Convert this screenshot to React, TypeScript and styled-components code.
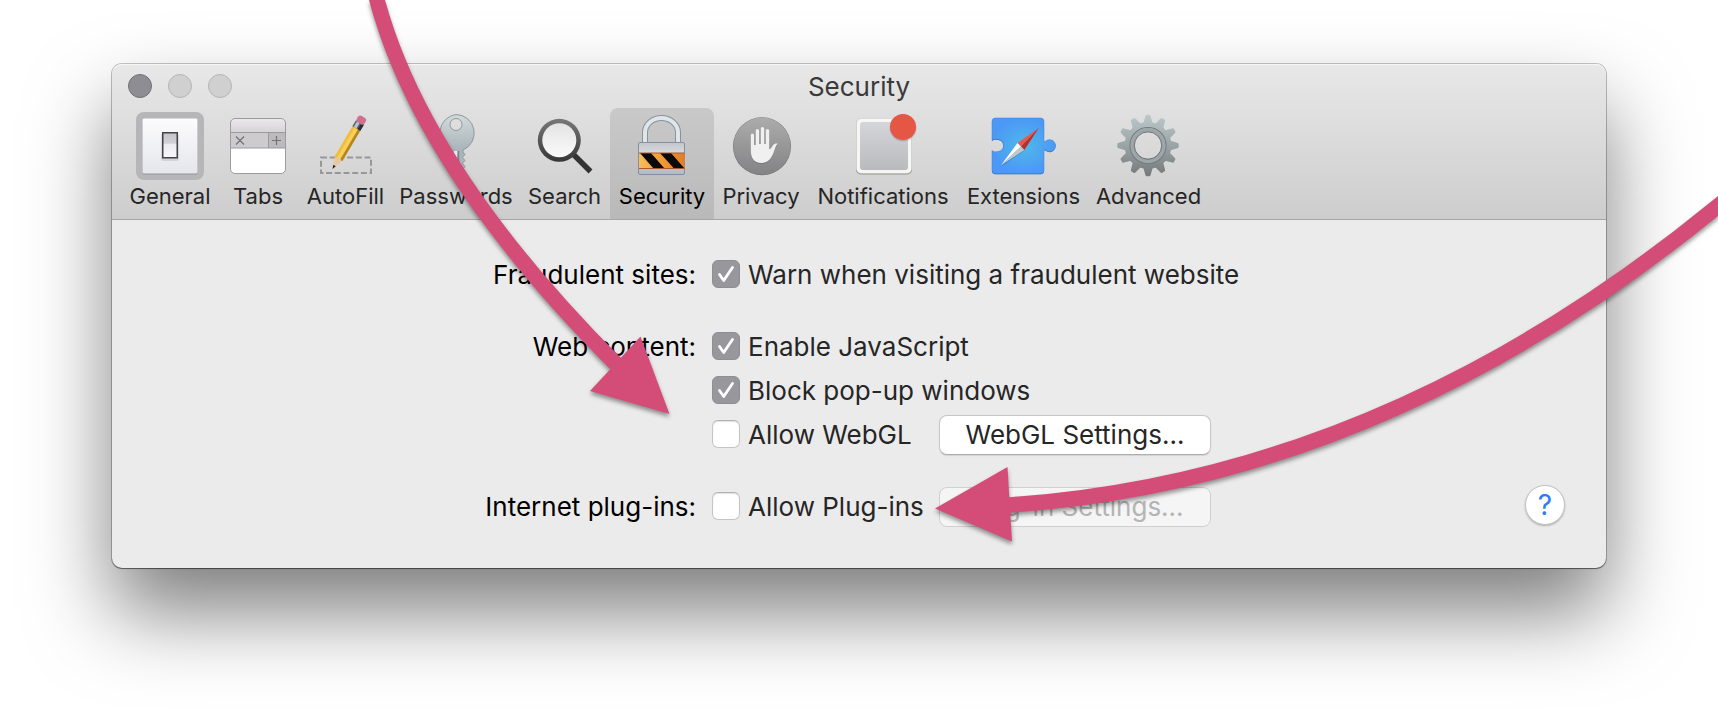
import React, { useState } from "react";
import styled, { createGlobalStyle } from "styled-components";

const GlobalStyle = createGlobalStyle`
  *, *::before, *::after { box-sizing: border-box; }
  body {
    margin: 0;
    background: #fff;
    font-family: Inter, "Liberation Sans", sans-serif;
    color: #262626;
  }
  button { font-family: inherit; }
`;

const Desktop = styled.main`
  position: relative;
  min-height: 100vh;
  overflow: hidden;
  padding: 64px 112px 160px;
`;

const Panel = styled.section`
  border-radius: 10px;
  background: #ebebeb;
  box-shadow:
    0 0 0 1px rgba(0, 0, 0, 0.22),
    0 1px 1px rgba(0, 0, 0, 0.4),
    0 44px 82px rgba(0, 0, 0, 0.51);
`;

const PanelHeader = styled.header`
  border-radius: 10px 10px 0 0;
  border-bottom: 1px solid #a6a6a6;
  background: linear-gradient(#e8e8e8, #cdcdcd);
  box-shadow: inset 0 1px 0 #f6f6f6;
`;

const TitleBar = styled.div`
  display: grid;
  grid-template-columns: 1fr auto 1fr;
  align-items: center;
  height: 44px;
  padding: 0 16px;
`;

const WindowControls = styled.div`
  display: flex;
  gap: 16px;
`;

const WindowButton = styled.button<{ $active?: boolean }>`
  width: 24px;
  height: 24px;
  padding: 0;
  border: 1px solid ${(p) => (p.$active ? "#727177" : "#b4b4b4")};
  border-radius: 50%;
  background: ${(p) => (p.$active ? "#8e8d93" : "#d0d0d0")};
`;

const Title = styled.h1`
  margin: 0;
  padding-top: 2px;
  font-size: 26px;
  font-weight: 400;
  line-height: 32px;
  color: #3a3a3a;
`;

const Toolbar = styled.nav`
  display: flex;
  padding: 0 10px;
`;

const ToolbarItem = styled.button<{ $width: number; $selected?: boolean }>`
  display: flex;
  flex-direction: column;
  align-items: center;
  gap: 2px;
  flex: 0 0 ${(p) => p.$width}px;
  height: 111px;
  padding: 4px 0 0;
  border: 0;
  border-radius: 8px 8px 0 0;
  background: ${(p) => (p.$selected ? "linear-gradient(#c9c9c9, #b9b9b9)" : "none")};
  font-size: 22px;
  line-height: 28px;
  white-space: nowrap;
  color: ${(p) => (p.$selected ? "#000" : "#262626")};
`;

const ItemIcon = styled.svg`
  flex: none;
  width: 68px;
  height: 68px;
  overflow: visible;
`;

const PanelBody = styled.div`
  display: grid;
  grid-template-columns: 1fr auto 1fr;
  padding: 32px 41px 40px;
`;

const Settings = styled.form`
  grid-column: 2;
  display: flex;
  flex-direction: column;
  gap: 28px;
`;

const SettingGroup = styled.div`
  display: grid;
  grid-template-columns: 210px 520px;
  column-gap: 16px;
`;

const GroupLabel = styled.span`
  justify-self: end;
  height: 44px;
  font-size: 26px;
  line-height: 46px;
  white-space: nowrap;
  color: #000;
`;

const Options = styled.div`
  display: flex;
  flex-direction: column;
`;

const OptionRow = styled.div`
  display: grid;
  grid-template-columns: 227px 272px;
  align-items: center;
  height: 44px;
`;

const CheckLabel = styled.label`
  display: flex;
  align-items: center;
  gap: 8px;
  white-space: nowrap;
`;

const CheckText = styled.span`
  padding-top: 2px;
  font-size: 26px;
  line-height: 32px;
`;

const CheckFrame = styled.span`
  display: grid;
  width: 28px;
  height: 28px;

  > * { grid-area: 1 / 1; }
`;

const CheckInput = styled.input`
  appearance: none;
  width: 28px;
  height: 28px;
  margin: 0;
  border: 1px solid #c4c4c4;
  border-top-color: #b0b0b0;
  border-radius: 6px;
  background: #fff;
  box-shadow: inset 0 1px 1px rgba(0, 0, 0, 0.12);

  &:checked {
    border-color: #8f8e94;
    background: #98979c;
    box-shadow: none;
  }
`;

const CheckMark = styled.svg`
  width: 28px;
  height: 28px;
  pointer-events: none;
`;

const SettingsButton = styled.button`
  height: 40px;
  margin-top: 2px;
  padding: 0;
  border: 1px solid #c6c6c6;
  border-bottom-color: #aeaeae;
  border-radius: 8px;
  background: #fff;
  box-shadow: 0 1px 1px rgba(0, 0, 0, 0.1);
  font-size: 26px;
  line-height: 32px;
  color: #262626;

  &:disabled {
    border-color: #d0d0d0;
    background: #f5f5f5;
    box-shadow: none;
    color: #b4b4b4;
  }
`;

const HelpArea = styled.div`
  display: flex;
  justify-content: flex-end;
  align-items: center;
  align-self: end;
  height: 46px;
`;

const HelpButton = styled.button`
  width: 40px;
  height: 40px;
  padding: 0;
  border: 1px solid #c4c4c4;
  border-radius: 50%;
  background: #fff;
  box-shadow: 0 1px 2px rgba(0, 0, 0, 0.25);
  font-size: 28px;
  line-height: 32px;
  color: #2f7cf6;
`;

const Annotations = styled.svg`
  position: absolute;
  top: 0;
  left: 0;
  width: 100%;
  height: 728px;
  pointer-events: none;
  filter: drop-shadow(0 3px 2px rgba(0, 0, 0, 0.4));
`;

function GeneralIcon() {
  return (
    <ItemIcon viewBox="0 0 68 68" aria-hidden="true">
      <defs>
        <linearGradient id="plate" x2="0" y2="1">
          <stop stopColor="#fcfcfe" />
          <stop offset="1" stopColor="#e5e6eb" />
        </linearGradient>
        <linearGradient id="rocker" x2="0" y2="1">
          <stop stopColor="#c4c4c8" />
          <stop offset="0.42" stopColor="#d2d2d6" />
          <stop offset="0.46" stopColor="#ececf0" />
          <stop offset="1" stopColor="#f8f8fa" />
        </linearGradient>
      </defs>
      <rect width="68" height="68" rx="8" fill="#b6b6b8" />
      <rect x="6.5" y="7.5" width="55" height="55" rx="1.5" fill="#939396" />
      <rect x="6.5" y="6.5" width="55" height="55" rx="1.5" fill="url(#plate)" />
      <rect x="25" y="21" width="18" height="28" rx="2" fill="#000" opacity="0.1" />
      <rect x="26.750" y="20.750" width="14.500" height="25" fill="url(#rocker)" stroke="#434348" strokeWidth="1.500" />
    </ItemIcon>
  );
}

function TabsIcon() {
  return (
    <ItemIcon viewBox="0 0 68 68" aria-hidden="true">
      <defs>
        <linearGradient id="tabTop" x2="0" y2="1">
          <stop stopColor="#ebe9eb" />
          <stop offset="1" stopColor="#d6d4d6" />
        </linearGradient>
      </defs>
      <rect x="6.5" y="6.5" width="55" height="55" rx="4.5" fill="#fff" />
      <path d="M6.5 20V11a4.500 4.500 0 0 1 4.500-4.500h46a4.500 4.500 0 0 1 4.500 4.500v9z" fill="url(#tabTop)" />
      <rect x="6.500" y="20" width="38" height="16" fill="#cdcbcd" />
      <rect x="44.500" y="20" width="17" height="16" fill="#bcbabc" />
      <path d="M6.500 20.500h55M6.500 36h55M44.500 20.500V36" stroke="#9b9a9c" fill="none" />
      <rect x="6.500" y="6.500" width="55" height="55" rx="4.500" fill="none" stroke="#9c9c9e" />
      <path d="M12 24.500l8 8M20 24.500l-8 8M52.500 24v9M48 28.500h9" stroke="#737275" strokeWidth="1.200" />
    </ItemIcon>
  );
}

function AutoFillIcon() {
  return (
    <ItemIcon viewBox="0 0 68 68" aria-hidden="true">
      <rect x="9" y="45.500" width="50" height="15.500" fill="none" stroke="#979797" strokeWidth="2" strokeDasharray="6 2.700" />
      <g transform="translate(20.500 57) rotate(30.500)">
        <path d="M0 0L-4.500 -13L0 -15L4.500 -13Z" fill="#e8c79c" />
        <path d="M0 0L-1.400 -4H1.400Z" fill="#2b2420" />
        <path d="M-4.500 -12V-48H-1.500V-13Q-3 -11 -4.500 -12Z" fill="#f2bb3b" />
        <path d="M-1.800 -13V-48H2V-13Q0 -11 -1.800 -13Z" fill="#f9cf55" />
        <path d="M1.800 -13V-48H4.500V-12Q3 -11 1.800 -13Z" fill="#b98519" />
        <rect x="-4.600" y="-54" width="9.200" height="7" fill="#5d6773" />
        <rect x="-3" y="-54" width="3" height="7" fill="#b9c6d3" />
        <rect x="1.500" y="-54" width="3.100" height="7" fill="#2c2d31" />
        <rect x="-4.600" y="-60.500" width="9.200" height="7.500" rx="3" fill="#d0708f" />
      </g>
    </ItemIcon>
  );
}

function PasswordsIcon() {
  return (
    <ItemIcon viewBox="0 0 68 68" aria-hidden="true">
      <defs>
        <linearGradient id="keyMetal" x2="0" y2="1">
          <stop stopColor="#d2dadd" />
          <stop offset="0.600" stopColor="#a9b4b8" />
          <stop offset="1" stopColor="#b9c0c3" />
        </linearGradient>
      </defs>
      <path
        fillRule="evenodd"
        d="M34 2.500A18.500 18.500 0 0 1 41 38V40L43 42.500L40.500 45.500L43 48.500L40.500 51.500L43 54.500L41.500 56.500L42.500 60L37 63L29.500 58V38A18.500 18.500 0 0 1 34 2.500zM34 6.500a6 6 0 1 0 0 12a6 6 0 1 0 0-12z"
        fill="url(#keyMetal)"
        stroke="#8f999c"
        strokeWidth="1"
      />
      <path d="M33.500 39v20" stroke="#f0f3f4" strokeWidth="3" />
      <path d="M36.500 39v21" stroke="#7d878a" strokeWidth="1.500" />
    </ItemIcon>
  );
}

function SearchIcon() {
  return (
    <ItemIcon viewBox="0 0 68 68" aria-hidden="true">
      <defs>
        <linearGradient id="lensRim" x2="0" y2="1">
          <stop stopColor="#787878" />
          <stop offset="1" stopColor="#363636" />
        </linearGradient>
        <linearGradient id="lens" x2="0" y2="1">
          <stop stopColor="#e4e4e4" />
          <stop offset="1" stopColor="#fafafa" />
        </linearGradient>
      </defs>
      <path d="M42 42L59.500 59.500" stroke="#333" strokeWidth="5.500" />
      <circle cx="28.300" cy="28.300" r="21.500" fill="url(#lensRim)" />
      <circle cx="28.300" cy="28.300" r="17" fill="url(#lens)" />
    </ItemIcon>
  );
}

function SecurityIcon() {
  return (
    <ItemIcon viewBox="0 0 68 68" aria-hidden="true">
      <defs>
        <linearGradient id="lockBody" x2="0" y2="1">
          <stop stopColor="#c3c7cd" />
          <stop offset="0.350" stopColor="#d8dbdf" />
          <stop offset="1" stopColor="#b4b8bf" />
        </linearGradient>
        <linearGradient id="hazard">
          <stop stopColor="#f8bd5a" />
          <stop offset="0.500" stopColor="#f29a37" />
          <stop offset="1" stopColor="#e07d26" />
        </linearGradient>
      </defs>
      <path d="M17 31V20.500a16.500 14.500 0 0 1 33 0V31" fill="none" stroke="#8a929f" strokeWidth="6" />
      <path d="M17 31V20.500a16.500 14.500 0 0 1 33 0V31" fill="none" stroke="#dfe6e9" strokeWidth="4" />
      <rect x="10.500" y="30.500" width="46" height="32" rx="1.500" fill="url(#lockBody)" stroke="#8790a0" />
      <rect x="11" y="41" width="45.500" height="15.500" fill="url(#hazard)" />
      <path d="M12 41h11l13.500 15.500h-11zM32 41h11l13.500 15.500H46z" fill="#0c0a08" />
      <path d="M11 41h45.500M11 56.500h45.500" stroke="#a55a34" strokeWidth="1" />
    </ItemIcon>
  );
}

function PrivacyIcon() {
  const hand =
    "M23.800 38V23a1.600 1.600 0 0 1 3.200 0v10h1.700V18.700a1.700 1.700 0 0 1 3.400 0V32h1.700V16.600a1.700 1.700 0 0 1 3.400 0V32h1.600V18.700a1.700 1.700 0 0 1 3.400 0V37.500c1.800-.8 2.700-2.300 3.800-4.200c1-1.600 2.600-2 4.700-1.700c-1.700 1.800-2.400 4.200-3.500 7.400C45.500 44.500 42 51 34.500 51C27 51 23.800 46 23.800 38z";
  return (
    <ItemIcon viewBox="0 0 68 68" aria-hidden="true">
      <defs>
        <linearGradient id="disc" x2="0" y2="1">
          <stop stopColor="#acacac" />
          <stop offset="1" stopColor="#838385" />
        </linearGradient>
      </defs>
      <circle cx="35" cy="34.300" r="29" fill="#747476" />
      <circle cx="35" cy="34" r="28.500" fill="url(#disc)" />
      <path d={hand} fill="#6b6b6d" opacity="0.600" transform="translate(0 1)" />
      <path d={hand} fill="#f0f0f0" />
    </ItemIcon>
  );
}

function NotificationsIcon() {
  return (
    <ItemIcon viewBox="0 0 68 68" aria-hidden="true">
      <defs>
        <linearGradient id="tile" x2="0" y2="1">
          <stop stopColor="#d5d6da" />
          <stop offset="1" stopColor="#b9babc" />
        </linearGradient>
      </defs>
      <rect x="7" y="7.500" width="56" height="55" rx="5" fill="#929290" />
      <rect x="7" y="6.500" width="56" height="55" rx="5" fill="#c2c2c2" />
      <rect x="7.700" y="6.700" width="54.600" height="54.600" rx="4.500" fill="#f6f6f4" />
      <rect x="11" y="10" width="48" height="48" rx="3" fill="url(#tile)" />
      <circle cx="54" cy="16" r="13.500" fill="#000" opacity="0.140" />
      <circle cx="54" cy="15" r="13" fill="#e65644" />
    </ItemIcon>
  );
}

function ExtensionsIcon() {
  const outline =
    "M5.500 6H50.500A3.500 3.500 0 0 1 54 9.500V27.500C54 30 55 30 56 28.800A6 6 0 1 1 56 38.500C55 37 54 37.300 54 39.500V58.200A3.500 3.500 0 0 1 50.500 61.700H5.500A3.500 3.500 0 0 1 2 58.200V38.500C4 40.500 6 39.500 8 39.500A5.500 6 0 0 0 8 27.500C6 27.500 4 26.500 2 28.500V9.500A3.500 3.500 0 0 1 5.500 6Z";
  return (
    <ItemIcon viewBox="0 0 68 68" aria-hidden="true">
      <defs>
        <radialGradient id="puzzle">
          <stop stopColor="#4fb9ea" />
          <stop offset="1" stopColor="#4c98f6" />
        </radialGradient>
      </defs>
      <path d={outline} fill="#2c62ac" transform="translate(0 0.600)" />
      <path d={outline} fill="url(#puzzle)" stroke="#3d7fd6" strokeWidth="0.500" />
      <path d="M11.500 54.500L28 32L34.500 38.500Z" fill="#1f4f8d" opacity="0.350" />
      <path d="M49 15.700L27.500 31L31 34.500Z" fill="#e9584b" />
      <path d="M49 15.700L31 34.500L34.300 38Z" fill="#b8302a" />
      <path d="M11 53.300L27.500 31L31 34.500Z" fill="#fff" />
      <path d="M11 53.300L31 34.500L34.300 38Z" fill="#c3c7cb" />
    </ItemIcon>
  );
}

function AdvancedIcon() {
  const teeth = Array.from({ length: 12 }, (_, i) => i * 30);
  return (
    <ItemIcon viewBox="0 0 68 68" aria-hidden="true">
      <defs>
        <linearGradient id="gear" gradientUnits="userSpaceOnUse" x1="0" y1="2" x2="0" y2="65">
          <stop stopColor="#bccacd" />
          <stop offset="0.500" stopColor="#9aa3a5" />
          <stop offset="1" stopColor="#747879" />
        </linearGradient>
        <mask id="gearShape">
          <circle cx="33" cy="33.500" r="23.500" fill="#fff" />
          {teeth.map((a) => (
            <path
              key={a}
              d="M28.100 12L30.300 4.200Q30.500 2.800 31.800 2.800H34.300Q35.500 2.800 35.700 4.200L37.900 12Z"
              fill="#fff"
              transform={`rotate(${a} 33 33.500)`}
            />
          ))}
          <circle cx="33" cy="33.500" r="13.500" fill="#000" />
        </mask>
      </defs>
      <rect width="68" height="68" fill="url(#gear)" mask="url(#gearShape)" />
      <circle cx="33" cy="33.500" r="18" fill="none" stroke="#737b7d" strokeWidth="1.200" />
      <circle cx="33" cy="33.500" r="15.800" fill="none" stroke="#9da7a9" strokeWidth="3.500" />
      <circle cx="33" cy="33.500" r="13.700" fill="none" stroke="#6d7375" strokeWidth="1" />
    </ItemIcon>
  );
}

const toolbarItems = [
  { label: "General", width: 96, Icon: GeneralIcon },
  { label: "Tabs", width: 80, Icon: TabsIcon },
  { label: "AutoFill", width: 95, Icon: AutoFillIcon },
  { label: "Passwords", width: 126, Icon: PasswordsIcon },
  { label: "Search", width: 91, Icon: SearchIcon },
  { label: "Security", width: 104, Icon: SecurityIcon },
  { label: "Privacy", width: 94, Icon: PrivacyIcon },
  { label: "Notifications", width: 150, Icon: NotificationsIcon },
  { label: "Extensions", width: 131, Icon: ExtensionsIcon },
  { label: "Advanced", width: 119, Icon: AdvancedIcon },
];

function CheckBox({ label, defaultChecked = false }: { label: string; defaultChecked?: boolean }) {
  const [checked, setChecked] = useState(defaultChecked);
  return (
    <CheckLabel>
      <CheckFrame>
        <CheckInput type="checkbox" checked={checked} onChange={(e) => setChecked(e.target.checked)} />
        {checked && (
          <CheckMark viewBox="0 0 28 28" aria-hidden="true">
            <path d="M7.500 14.500L11.700 20.500L20.500 7.500" fill="none" stroke="#fff" strokeWidth="2.800" strokeLinecap="round" strokeLinejoin="round" />
          </CheckMark>
        )}
      </CheckFrame>
      <CheckText>{label}</CheckText>
    </CheckLabel>
  );
}

export default function App() {
  const [selected, setSelected] = useState("Security");
  return (
    <>
      <GlobalStyle />
      <Desktop>
        <Panel>
          <PanelHeader>
            <TitleBar>
              <WindowControls>
                <WindowButton type="button" aria-label="Close" $active />
                <WindowButton type="button" aria-label="Minimize" />
                <WindowButton type="button" aria-label="Zoom" />
              </WindowControls>
              <Title>Security</Title>
            </TitleBar>
            <Toolbar>
              {toolbarItems.map(({ label, width, Icon }) => (
                <ToolbarItem
                  key={label}
                  type="button"
                  $width={width}
                  $selected={label === selected}
                  onClick={() => setSelected(label)}
                >
                  <Icon />
                  {label}
                </ToolbarItem>
              ))}
            </Toolbar>
          </PanelHeader>
          <PanelBody>
            <Settings>
              <SettingGroup role="group" aria-labelledby="fraud">
                <GroupLabel id="fraud">Fraudulent sites:</GroupLabel>
                <Options>
                  <OptionRow>
                    <CheckBox label="Warn when visiting a fraudulent website" defaultChecked />
                  </OptionRow>
                </Options>
              </SettingGroup>
              <SettingGroup role="group" aria-labelledby="content">
                <GroupLabel id="content">Web content:</GroupLabel>
                <Options>
                  <OptionRow>
                    <CheckBox label="Enable JavaScript" defaultChecked />
                  </OptionRow>
                  <OptionRow>
                    <CheckBox label="Block pop-up windows" defaultChecked />
                  </OptionRow>
                  <OptionRow>
                    <CheckBox label="Allow WebGL" />
                    <SettingsButton type="button">WebGL Settings…</SettingsButton>
                  </OptionRow>
                </Options>
              </SettingGroup>
              <SettingGroup role="group" aria-labelledby="plugins">
                <GroupLabel id="plugins">Internet plug-ins:</GroupLabel>
                <Options>
                  <OptionRow>
                    <CheckBox label="Allow Plug-ins" />
                    <SettingsButton type="button" disabled>
                      Plug-in Settings…
                    </SettingsButton>
                  </OptionRow>
                </Options>
              </SettingGroup>
            </Settings>
            <HelpArea>
              <HelpButton type="button" aria-label="Help">
                ?
              </HelpButton>
            </HelpArea>
          </PanelBody>
        </Panel>
        <Annotations viewBox="0 0 1718 728" preserveAspectRatio="xMidYMin slice" aria-hidden="true">
          <g fill="none" stroke="#d44d79" strokeWidth="15.500">
            <path d="M372 -18L377 0Q423 171 618 366" />
            <path d="M1005 505.500L1010 505Q1385 479 1718 206L1740 188" />
          </g>
          <path d="M590 391L640.500 336.500L669.500 414Z" fill="#d44d79" />
          <path d="M935 508.500L1007.500 467L1012 541.500Z" fill="#d44d79" />
        </Annotations>
      </Desktop>
    </>
  );
}
